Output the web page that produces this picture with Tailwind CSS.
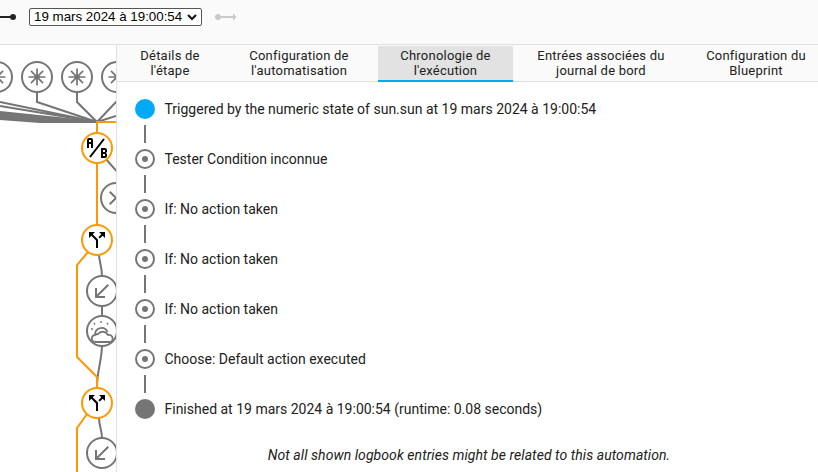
<!DOCTYPE html>
<html lang="fr">
  <head>
    <meta charset="UTF-8" />
    <title>Trace</title>
    <script src="https://cdn.jsdelivr.net/npm/@tailwindcss/browser@4"></script>
  </head>
  <body class="w-[818px] h-[472px] overflow-hidden bg-white font-['Roboto',sans-serif] text-[#212121]">
    <!-- toolbar -->
    <div class="h-[45px] bg-[#fafafa] border-b border-[#e0e0e0] flex items-start relative">
      <svg class="w-[20px] h-[34px] shrink-0" viewBox="0 0 20 34">
        <path d="M0 17H13" stroke="#222" stroke-width="2" />
        <circle cx="13" cy="17" r="3" fill="#222" />
      </svg>
      <div class="ml-[9px] mt-[8px] w-[173px] h-[18px] border border-[#555] rounded-[2px] bg-white flex items-center justify-between pl-[4px] pr-[4px] text-[13.33px] font-['Liberation_Sans',sans-serif] text-black">
        <span>19 mars 2024 à 19:00:54</span>
        <svg class="w-[10px] h-[10px]" viewBox="0 0 10 10"><path d="M1 3l4 4 4-4" fill="none" stroke="#111" stroke-width="2" /></svg>
      </div>
      <svg class="ml-[12px] w-[26px] h-[34px] shrink-0" viewBox="0 0 26 34">
        <path d="M4 17H21" stroke="#c8c8c8" stroke-width="2" />
        <circle cx="4" cy="17" r="3" fill="#c8c8c8" />
        <path d="M19 13.500l3.500 3.500-3.500 3.500Z" fill="#c8c8c8" />
      </svg>
    </div>
    <div class="flex h-[427px]">
      <!-- graph -->
      <div class="w-[117px] h-full shrink-0 border-r border-[#e0e0e0] overflow-hidden">
        <svg class="w-[116px] h-[427px] block" viewBox="0 45 116 427">
          <path d="M0 111L97 121V123L40 123L0 120Z" fill="#757575" />
          <g fill="none" stroke="#757575" stroke-width="2">
            <path d="M37 92V102L97 122M77 92V102L97 122M117 92V101L97 122" />
            <path d="M0 102L97 122M0 106L97 122" />
            <path d="M116 116L97 122" />
            <path d="M105 158L120 175" />
            <path d="M99 254C99 262 102 266 102 276M102 305V317M102 345C102 360 97 370 97 388M99 418C99 426 102 430 102 438" />
          </g>
          <g fill="none" stroke="#ff9800" stroke-width="2">
            <path d="M116 122H97V225M88 252L77 265V357L97 377V388M87 414L77 428V472" />
          </g>
          <g fill="#fff" stroke="#757575" stroke-width="2">
            <circle cx="-3" cy="77" r="15" />
            <circle cx="37" cy="77" r="15" />
            <circle cx="77" cy="77" r="15" />
            <circle cx="117" cy="77" r="15" />
            <circle cx="116" cy="198" r="15" />
            <circle cx="102" cy="291" r="15" />
            <circle cx="102" cy="331" r="15" />
            <circle cx="102" cy="453" r="15" />
          </g>
          <g fill="#fff" stroke="#ff9800" stroke-width="2">
            <circle cx="97" cy="148" r="15" />
            <circle cx="97" cy="240" r="15" />
            <circle cx="97" cy="403" r="15" />
          </g>
          <g fill="#757575">
            <path transform="translate(-13.200 66.800) scale(.85)" d="M11 2h2v7.600l5.400-5.400 1.400 1.400L14.400 11H22v2h-7.600l5.400 5.400-1.400 1.400-5.400-5.400V22h-2v-7.600l-5.400 5.400-1.400-1.400L9.600 13H2v-2h7.600L4.200 5.600l1.400-1.400L11 9.600Z" />
            <circle cx="-3" cy="77" r="2.500" />
            <path transform="translate(26.800 66.800) scale(.85)" d="M11 2h2v7.600l5.400-5.400 1.400 1.400L14.400 11H22v2h-7.600l5.400 5.400-1.400 1.400-5.400-5.400V22h-2v-7.600l-5.400 5.400-1.400-1.400L9.600 13H2v-2h7.600L4.200 5.600l1.400-1.400L11 9.600Z" />
            <circle cx="37" cy="77" r="2.500" />
            <path transform="translate(66.800 66.800) scale(.85)" d="M11 2h2v7.600l5.400-5.400 1.400 1.400L14.400 11H22v2h-7.600l5.400 5.400-1.400 1.400-5.400-5.400V22h-2v-7.600l-5.400 5.400-1.400-1.400L9.600 13H2v-2h7.600L4.200 5.600l1.400-1.400L11 9.600Z" />
            <circle cx="77" cy="77" r="2.500" />
            <path transform="translate(106.800 66.800) scale(.85)" d="M11 2h2v7.600l5.400-5.400 1.400 1.400L14.400 11H22v2h-7.600l5.400 5.400-1.400 1.400-5.400-5.400V22h-2v-7.600l-5.400 5.400-1.400-1.400L9.600 13H2v-2h7.600L4.200 5.600l1.400-1.400L11 9.600Z" />
            <circle cx="117" cy="77" r="2.500" />
            <path transform="translate(104 186)" d="M19 6.410L17.590 5 12 10.590 6.410 5 5 6.410 10.590 12 5 17.590 6.410 19 12 13.410 17.590 19 19 17.590 13.410 12Z" />
            <path transform="translate(90 279)" d="M19 6.410L17.590 5L7 15.590V9H5V19H15V17H8.410L19 6.410Z" />
            <path transform="translate(90 441)" d="M19 6.410L17.590 5L7 15.590V9H5V19H15V17H8.410L19 6.410Z" />
          </g>
          <g fill="none" stroke="#757575" stroke-width="1.800">
            <path d="M95 334a6.500 6.500 0 0 1 12.500-2" />
            <path d="M95.500 342a3.500 3.500 0 0 1-.5-7a5 5 0 0 1 3-1a6 6 0 0 1 10 1a3.500 3.500 0 0 1 2 7Z" fill="#fff" />
            <path d="M101 321v2M94 323l1 1.500M108 323l-1 1.500M91 329h2" stroke-width="1.400" />
          </g>
          <g fill="#000">
            <path transform="translate(85 136)" d="M4 2A2 2 0 0 0 2 4V12H4V8H6V12H8V4A2 2 0 0 0 6 2H4M4 4H6V6H4M22 15.500V14A2 2 0 0 0 20 12H16V22H20A2 2 0 0 0 22 20V18.500A1.540 1.540 0 0 0 20.500 17A1.540 1.540 0 0 0 22 15.500M20 20H18V18H20V20M20 16H18V14H20M5.790 21.610L4.210 20.390L18.210 2.390L19.790 3.610Z" />
            <path transform="translate(85 228)" d="M14 4L16.290 6.290L13.410 9.170L14.830 10.590L17.710 7.710L20 10V4M10 4H4V10L6.290 7.710L11 12.410V20H13V11.590L7.710 6.290" />
            <path transform="translate(85 391)" d="M14 4L16.290 6.290L13.410 9.170L14.830 10.590L17.710 7.710L20 10V4M10 4H4V10L6.290 7.710L11 12.410V20H13V11.590L7.710 6.290" />
          </g>
        </svg>
      </div>
      <!-- panel -->
      <div class="flex-1 min-w-0 overflow-hidden">
        <div class="h-[37px] flex bg-[#fafafa] border-b border-[#e0e0e0] text-[13px] leading-[15px] tracking-[0.22px] text-center text-[#212121] whitespace-nowrap">
          <div class="ml-[10px] w-[86px] shrink-0 pt-[3px]">Détails de<br />l'étape</div>
          <div class="ml-[7px] w-[158px] shrink-0 pt-[3px]">Configuration de<br />l'automatisation</div>
          <div class="w-[135px] shrink-0 pt-[3px] mt-[1px] -mb-[1px] bg-[#e2e2e2] border-b-2 border-[#03a9f4]"><div class="-mt-[1px]">Chronologie de<br />l'exécution</div></div>
          <div class="w-[176px] shrink-0 pt-[3px]">Entrées associées du<br />journal de bord</div>
          <div class="w-[134px] shrink-0 pt-[3px]">Configuration du<br />Blueprint</div>
        </div>
        <div class="pt-[17px] pl-[18px] text-[14px] leading-[20px] text-[#212121]">
          <div class="flex items-center gap-[9.5px] h-[20px]">
            <span class="w-[20px] h-[20px] rounded-full bg-[#03a9f4]"></span>
            <span>Triggered by the numeric state of sun.sun at 19 mars 2024 à 19:00:54</span>
          </div>
          <div class="w-[20px] h-[30px] flex justify-center items-center"><span class="w-[2px] h-[18px] bg-[#757575]"></span></div>
          <div class="flex items-center gap-[9.5px] h-[20px]">
            <span class="w-[20px] h-[20px] rounded-full border-2 border-[#757575] flex items-center justify-center"><span class="w-[6px] h-[6px] rounded-full bg-[#757575]"></span></span>
            <span>Tester Condition inconnue</span>
          </div>
          <div class="w-[20px] h-[30px] flex justify-center items-center"><span class="w-[2px] h-[18px] bg-[#757575]"></span></div>
          <div class="flex items-center gap-[9.5px] h-[20px]">
            <span class="w-[20px] h-[20px] rounded-full border-2 border-[#757575] flex items-center justify-center"><span class="w-[6px] h-[6px] rounded-full bg-[#757575]"></span></span>
            <span>If: No action taken</span>
          </div>
          <div class="w-[20px] h-[30px] flex justify-center items-center"><span class="w-[2px] h-[18px] bg-[#757575]"></span></div>
          <div class="flex items-center gap-[9.5px] h-[20px]">
            <span class="w-[20px] h-[20px] rounded-full border-2 border-[#757575] flex items-center justify-center"><span class="w-[6px] h-[6px] rounded-full bg-[#757575]"></span></span>
            <span>If: No action taken</span>
          </div>
          <div class="w-[20px] h-[30px] flex justify-center items-center"><span class="w-[2px] h-[18px] bg-[#757575]"></span></div>
          <div class="flex items-center gap-[9.5px] h-[20px]">
            <span class="w-[20px] h-[20px] rounded-full border-2 border-[#757575] flex items-center justify-center"><span class="w-[6px] h-[6px] rounded-full bg-[#757575]"></span></span>
            <span>If: No action taken</span>
          </div>
          <div class="w-[20px] h-[30px] flex justify-center items-center"><span class="w-[2px] h-[18px] bg-[#757575]"></span></div>
          <div class="flex items-center gap-[9.5px] h-[20px]">
            <span class="w-[20px] h-[20px] rounded-full border-2 border-[#757575] flex items-center justify-center"><span class="w-[6px] h-[6px] rounded-full bg-[#757575]"></span></span>
            <span>Choose: Default action executed</span>
          </div>
          <div class="w-[20px] h-[30px] flex justify-center items-center"><span class="w-[2px] h-[18px] bg-[#757575]"></span></div>
          <div class="flex items-center gap-[9.5px] h-[20px]">
            <span class="w-[20px] h-[20px] rounded-full bg-[#757575]"></span>
            <span>Finished at 19 mars 2024 à 19:00:54 (runtime: 0.08 seconds)</span>
          </div>
          <div class="mt-[26px] -ml-[15px] text-center italic tracking-[0.06px]">Not all shown logbook entries might be related to this automation.</div>
        </div>
      </div>
    </div>
  </body>
</html>
